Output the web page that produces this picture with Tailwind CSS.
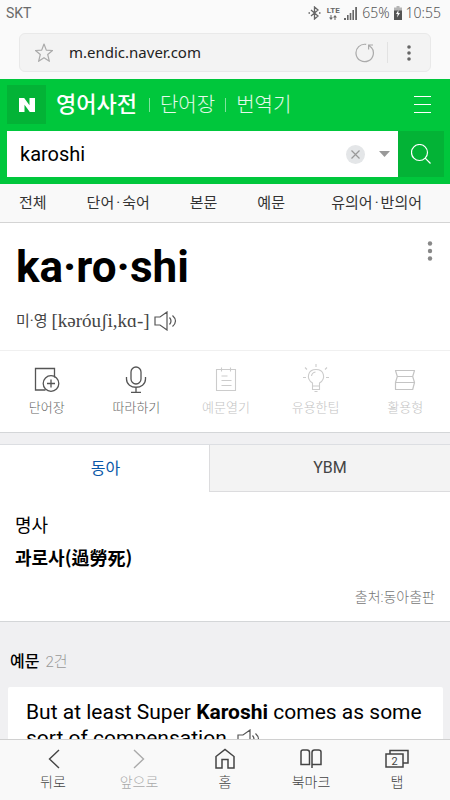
<!DOCTYPE html>
<html lang="ko">
<head>
<meta charset="utf-8">
<meta name="viewport" content="width=device-width, initial-scale=1">
<title>영어사전 - karoshi</title>
<script src="https://cdn.jsdelivr.net/npm/@tailwindcss/browser@4"></script>
</head>
<body class="flex h-screen flex-col overflow-hidden bg-[#f0f0f2] font-['Roboto','Noto_Sans_CJK_KR',sans-serif] text-black">
  <!-- Status bar and address bar -->
  <header class="shrink-0 bg-[#fafafa] pb-[7px]">
    <div class="flex h-[26px] items-center pr-[9px] pl-[6px] text-sm font-light text-[#555] font-['Noto_Sans','Noto_Sans_CJK_KR',sans-serif]">
      <span class="flex-1 font-normal text-[#6a6a6a] font-['Roboto',sans-serif]">SKT</span>
      <svg class="mr-[5px] h-[14px] w-[13px]" viewBox="0 0 13 14" fill="none" stroke="#666" stroke-width="1.3"><path d="M3 4l7 6-3.5 3V1L10 4l-7 6M0.5 7h1.5M11 7h1.5"/></svg>
      <span class="mr-[4px] flex w-[14px] flex-col items-center font-['Roboto',sans-serif] text-[8px] leading-[8px] font-bold text-[#666]">LTE
        <svg class="h-[5px] w-[8px]" viewBox="0 0 8 5" fill="#666"><path d="M1.5 0h1v2.500H4L2 5 0 2.500h1.500zM5.500 5h1V2.500H8L6 0 4 2.500h1.500z"/></svg>
      </span>
      <svg class="mr-[5px] h-[13px] w-[13px]" viewBox="0 0 13 13" fill="#666"><path d="M0 11h2v2H0zM3 8h1.600v5H3zM5.700 6h1.600v7H5.700zM8.400 3H10v10H8.400zM11.200 0H13v13h-1.800z"/></svg>
      <span>65%</span>
      <svg class="mx-[4px] h-[14px] w-[8px]" viewBox="0 0 8 14"><path d="M2.500 0h3v1.500H8V5H0V1.500h2.500z" fill="#b5b5b5"/><path d="M0 4.500h8V14H0z" fill="#555"/><path d="M4.500 4L2 8h1.700L3 11.500 6 7H4.300z" fill="#fff"/></svg>
      <span>10:55</span>
    </div>
    <div class="mx-[19px] mt-[7px] flex h-[39px] items-center rounded-md border border-[#e9e9e9] bg-[#f3f3f3] pl-[15px]">
      <button aria-label="즐겨찾기"><svg class="h-[20px] w-[18px]" viewBox="0 0 18 20" fill="none" stroke="#aaa" stroke-width="1.200" stroke-linejoin="round"><path d="M9 1l2.300 6.100 6.200.4-4.800 4 1.700 6.800L9 14.700l-5.400 3.600 1.700-6.800-4.800-4 6.200-.4z"/></svg></button>
      <input aria-label="주소" value="m.endic.naver.com" class="ml-[16px] min-w-0 flex-1 bg-transparent text-[15px] text-[#222] outline-none font-['Noto_Sans',sans-serif]">
      <button aria-label="새로고침"><svg class="h-[20px] w-[20px]" viewBox="0 0 20 20" fill="none" stroke="#aaa" stroke-width="1.200"><path d="M16.200 4.200a8.700 8.700 0 1 1-5-2.800M13 2h5M13.600 1.500v5M13.800 2.200l3 3"/></svg></button>
      <span class="mx-[12px] h-[21px] w-px bg-[#e2e2e2]"></span>
      <button aria-label="더보기" class="px-[6px]"><svg class="h-[18px] w-[6px]" viewBox="0 0 6 18" fill="#666"><circle cx="3" cy="3" r="1.800"/><circle cx="3" cy="9" r="1.800"/><circle cx="3" cy="15" r="1.800"/></svg></button>
      <span class="w-[12px]"></span>
    </div>
  </header>

  <main class="min-h-0 flex-1 overflow-hidden">
    <div class="bg-[#00c73c] pt-[6px] pr-[6px] pb-[7px] pl-[7px]">
      <div class="flex h-[39px] items-center">
        <a href="#" aria-label="네이버" class="flex size-[39px] items-center justify-center bg-[#03b336]"><svg class="h-[14px] w-[16px]" viewBox="0 0 16 14" fill="#fff"><path d="M0 0h5.200l5.300 7.200V0H16v14h-5.200L5.500 6.800V14H0z"/></svg></a>
        <a href="#" class="ml-[10px] text-[22px] leading-[38px] font-medium text-white">영어사전</a>
        <span class="mr-[10px] ml-[12px] h-[14px] w-px bg-white/50"></span>
        <a href="#" class="text-[20px] font-light text-white/90">단어장</a>
        <span class="mx-[10px] h-[14px] w-px bg-white/50"></span>
        <a href="#" class="text-[20px] font-light text-white/90">번역기</a>
        <button aria-label="메뉴" class="mr-[13px] ml-auto flex flex-col gap-[7px]"><i class="h-px w-[17px] bg-white"></i><i class="h-px w-[17px] bg-white"></i><i class="h-px w-[17px] bg-white"></i></button>
      </div>
      <form class="mt-[7px] flex h-[46px] items-center bg-white">
        <input aria-label="검색어" value="karoshi" class="min-w-0 flex-1 bg-transparent pl-[13px] text-[20px] outline-none">
        <button type="button" aria-label="지우기" class="mr-[14px]"><svg class="size-[19px]" viewBox="0 0 19 19" fill="none"><circle cx="9.500" cy="9.500" r="9.500" fill="#e4e6e8"/><path d="M5.500 5.500l8 8m0-8l-8 8" stroke="#999" stroke-width="1.200"/></svg></button>
        <button type="button" aria-label="자동완성" class="mr-[8px]"><svg class="h-[6px] w-[11px]" viewBox="0 0 11 6" fill="#999"><path d="M0 0h11L5.500 6z"/></svg></button>
        <button aria-label="검색" class="flex h-full w-[46px] items-center justify-center bg-[#03b336]"><svg class="size-[20px]" viewBox="0 0 20 20" fill="none" stroke="#fff" stroke-width="1.200"><circle cx="8.500" cy="8.500" r="8"/><path d="M14.200 14.200l5.300 5.300"/></svg></button>
      </form>
    </div>

    <nav class="flex h-[39px] items-center gap-[40px] border-b border-[#d4d4d4] bg-[#f9f9f9] pr-[28px] pl-[19px] text-[15px] text-[#333]">
      <a href="#">전체</a><a href="#">단어<span class="mx-[2px]">·</span>숙어</a><a href="#">본문</a><a href="#">예문</a><a href="#" class="ml-auto">유의어<span class="mx-[2px]">·</span>반의어</a>
    </nav>

    <section class="bg-white">
      <div class="flex h-[127px] justify-between px-[16px]">
        <div>
          <h1 class="mt-[18px] text-[44px] leading-[52px] font-bold">ka·ro·shi</h1>
          <p class="mt-[16px] flex h-[24px] items-center text-[#444]">
            <span class="text-[15px]">미·영</span>
            <span class="ml-[4px] font-['Liberation_Serif',serif] text-[19px]">[kəróuʃi,kɑ-]</span>
            <button aria-label="발음 듣기" class="ml-[4px]"><svg class="h-[20px] w-[24px]" viewBox="0 0 24 20" fill="none" stroke="#555" stroke-width="1.200"><path d="M1 6h5l7-5v18l-7-5H1zM15.500 6.500q3 3.500 0 7M18.500 4.500q6 5.500 0 11"/></svg></button>
          </p>
        </div>
        <button aria-label="단어 메뉴" class="mt-[18px] mr-px self-start"><svg class="h-[20px] w-[6px]" viewBox="0 0 6 20" fill="#888"><circle cx="3" cy="2.500" r="2.200"/><circle cx="3" cy="10" r="2.200"/><circle cx="3" cy="17.500" r="2.200"/></svg></button>
      </div>
      <div class="grid h-[83px] grid-cols-5 border-t border-b border-t-[#f0f0f0] border-b-[#d4d6d8] pt-[14px] pl-[2px] text-[13px] leading-[20px] font-light text-[#666]">
        <button class="flex flex-col items-center gap-[5px]"><svg class="h-[28px] w-[28px]" viewBox="0 0 28 28" fill="none" stroke="#555" stroke-width="1.300"><path d="M12.500 25H2.500V3.500h19v9"/><circle cx="18" cy="18.500" r="7.800"/><path d="M14 18.500h8M18 14.500v8"/></svg>단어장</button>
        <button class="flex flex-col items-center gap-[5px]"><svg class="h-[28px] w-[28px]" viewBox="0 0 28 28" fill="none" stroke="#555" stroke-width="1.300"><rect x="9" y="2" width="10" height="17" rx="5"/><path d="M4.500 12v2c0 11 19 11 19 0v-2M14 22.300v5M9 27.300h10"/></svg>따라하기</button>
        <button disabled class="flex flex-col items-center gap-[5px] text-[#c4c4c4]"><svg class="h-[28px] w-[28px]" viewBox="0 0 28 28" fill="none" stroke="#ccc" stroke-width="1.100"><path d="M4.500 4.500h19v21h-19zM9.500 2.500V6.500M18.500 2.500V6.500M9.500 11h6M9.500 15.500h10M9.500 20.500h10"/></svg>예문열기</button>
        <button disabled class="flex flex-col items-center gap-[5px] text-[#c4c4c4]"><svg class="h-[28px] w-[28px] overflow-visible" viewBox="0 0 28 28" fill="none" stroke="#ccc" stroke-width="1.100"><path d="M10.500 21v-3C3.500 13.500 6 4.500 14 4.500s10.500 9 3.500 13.500v3zM10.500 21v3.500h7V21M12.500 26.500h3M14 2V-1M5 4.500L3 2.500M23 4.500l2-2M4 12.500H1M24 12.500h3M9.500 11q.500-3.500 4-4"/></svg>유용한팁</button>
        <button disabled class="flex flex-col items-center gap-[5px] text-[#c4c4c4]"><svg class="h-[28px] w-[28px]" viewBox="0 0 28 28" fill="none" stroke="#c4c4c4" stroke-width="1.200" stroke-linejoin="round"><path d="M4.500 5.500h19l-1.800 6 1.800 6-1.800 7H4.500V17.500l1.800-6zM6.300 11.500h15.400M4.500 17.500h19"/></svg>활용형</button>
      </div>
    </section>

    <section class="mt-[11px] border-b border-[#d4d6d8] bg-white">
      <div class="grid h-[48px] grid-cols-[209fr_241fr] border-t border-[#dcdee2] text-[16px]">
        <button class="pl-[2px] text-[#0a58a8]">동아</button>
        <button class="border-b border-l border-[#dcdcde] bg-[#f3f3f3] text-[#444]">YBM</button>
      </div>
      <div class="px-[15px] pt-[20px] pb-[14px]">
        <p class="text-[18px] leading-[28px]">명사</p>
        <p class="text-[18px] leading-[34px] font-bold font-['Noto_Sans_CJK_KR',sans-serif]">과로사(過勞死)</p>
        <p class="mt-[13px] text-right text-[14px] leading-[20px] font-light text-[#777]">출처:동아출판</p>
      </div>
    </section>

    <section>
      <h2 class="flex items-center gap-[6px] px-[10px] pt-[28px] pb-[13px] text-[16px] leading-[24px] font-medium">예문 <span class="text-[15px] font-light text-[#999]">2건</span></h2>
      <div class="mr-[7px] ml-[8px] rounded-xs bg-white px-[18px] pt-[12px] pb-[16px]">
        <p class="text-[21px] leading-[26px]">But at least Super <b>Karoshi</b> comes as some sort of compensation. <button aria-label="예문 듣기" class="inline-block align-middle"><svg class="h-[20px] w-[24px]" viewBox="0 0 24 20" fill="none" stroke="#555" stroke-width="1.200"><path d="M1 6h5l7-5v18l-7-5H1zM15.500 6.500q3 3.500 0 7M18.500 4.500q6 5.500 0 11"/></svg></button></p>
      </div>
    </section>
  </main>

  <nav class="z-10 grid h-[61px] shrink-0 grid-cols-5 border-t border-[#d0d0d0] bg-[#f9f9f9] px-[10px] pt-[8px] text-[14px] leading-[20px] font-light text-[#444]">
    <button class="flex flex-col items-center gap-[2px]"><svg class="h-[22px] w-[24px]" viewBox="0 0 24 22" fill="none" stroke="#444" stroke-width="1.400"><path d="M18 2L8.500 11l9.500 9"/></svg>뒤로</button>
    <button disabled class="flex flex-col items-center gap-[2px] text-[#aaa]"><svg class="h-[22px] w-[24px]" viewBox="0 0 24 22" fill="none" stroke="#aaa" stroke-width="1.400"><path d="M7 2l9.500 9L7 20"/></svg>앞으로</button>
    <button class="flex flex-col items-center gap-[2px]"><svg class="h-[22px] w-[24px]" viewBox="0 0 24 22" fill="none" stroke="#444" stroke-width="1.500"><path d="M3 8.500L12 1.500l9 7V20h-6v-8.500H9V20H3z"/></svg>홈</button>
    <button class="flex flex-col items-center gap-[2px]"><svg class="h-[22px] w-[24px]" viewBox="0 0 24 22" fill="none" stroke="#444" stroke-width="1.500"><path d="M2 16.500V4Q2 2 4 2h4Q10.500 2 10.500 4.500V16.500zM13 20V4.500Q13 2 15.500 2h4Q22 2 22 4V16.500H13"/></svg>북마크</button>
    <button class="flex flex-col items-center gap-[2px]"><svg class="h-[22px] w-[24px]" viewBox="0 0 24 22" fill="none" stroke="#444" stroke-width="1.500"><path d="M1 6h17v13H1zM5 6V2.500h18V15h-5"/><text x="9.500" y="16.500" text-anchor="middle" font-family="Roboto" font-size="11" font-weight="400" fill="#444" stroke="none">2</text></svg>탭</button>
  </nav>
</body>
</html>
